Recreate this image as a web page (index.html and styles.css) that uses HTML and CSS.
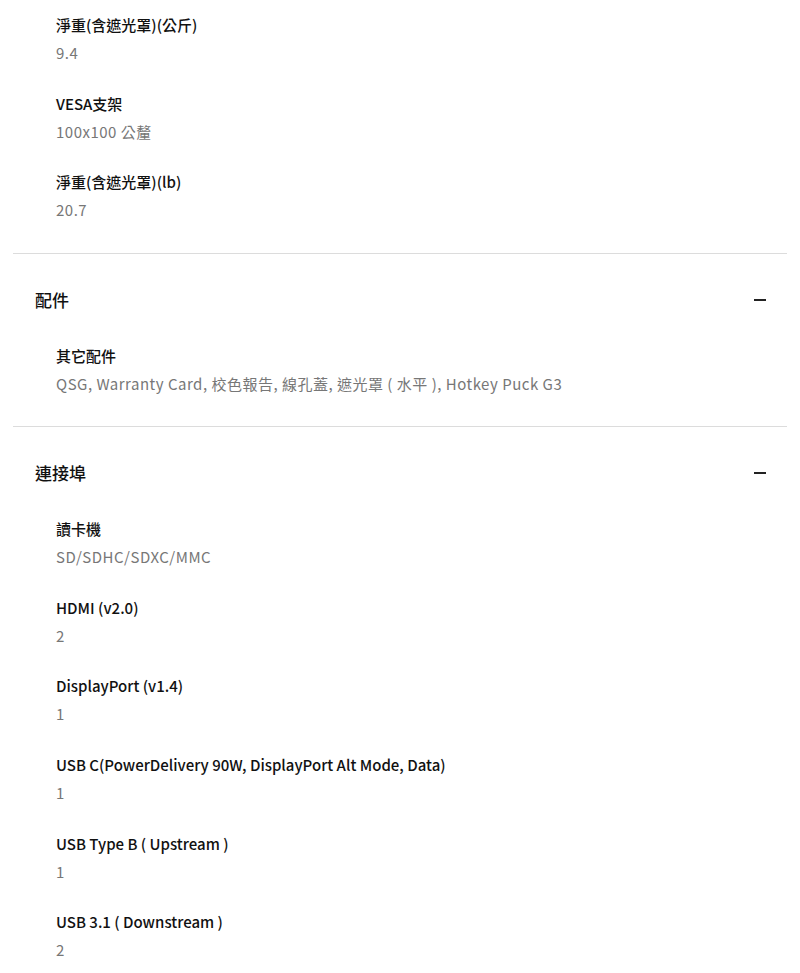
FILE: index.html
```html
<!DOCTYPE html>
<html lang="zh-Hant">
<head>
  <meta charset="UTF-8">
  <meta name="viewport" content="width=device-width, initial-scale=1.0">
  <title>規格</title>
  <link rel="stylesheet" href="styles.css">
</head>
<body>
  <div class="specs">
    <section class="group">
      <div class="items">
        <div class="item">
          <div class="label">淨重(含遮光罩)(公斤)</div>
          <div class="value">9.4</div>
        </div>
        <div class="item">
          <div class="label">VESA支架</div>
          <div class="value">100x100 公釐</div>
        </div>
        <div class="item">
          <div class="label">淨重(含遮光罩)(lb)</div>
          <div class="value">20.7</div>
        </div>
      </div>
    </section>

    <section class="group">
      <div class="group-head">
        <h3>配件</h3>
        <span class="toggle"></span>
      </div>
      <div class="items">
        <div class="item">
          <div class="label">其它配件</div>
          <div class="value">QSG, Warranty Card, 校色報告, 線孔蓋, 遮光罩 ( 水平 ), Hotkey Puck G3</div>
        </div>
      </div>
    </section>

    <section class="group">
      <div class="group-head">
        <h3>連接埠</h3>
        <span class="toggle"></span>
      </div>
      <div class="items">
        <div class="item">
          <div class="label">讀卡機</div>
          <div class="value">SD/SDHC/SDXC/MMC</div>
        </div>
        <div class="item">
          <div class="label">HDMI (v2.0)</div>
          <div class="value">2</div>
        </div>
        <div class="item">
          <div class="label">DisplayPort (v1.4)</div>
          <div class="value">1</div>
        </div>
        <div class="item">
          <div class="label">USB C(PowerDelivery 90W, DisplayPort Alt Mode, Data)</div>
          <div class="value">1</div>
        </div>
        <div class="item">
          <div class="label">USB Type B ( Upstream )</div>
          <div class="value">1</div>
        </div>
        <div class="item">
          <div class="label">USB 3.1 ( Downstream )</div>
          <div class="value">2</div>
        </div>
      </div>
    </section>
  </div>
</body>
</html>
```

FILE: styles.css
```css
body {
  margin: 0;
  background: #fff;
  color: #111;
  font-family: "Noto Sans CJK TC", "Noto Sans", sans-serif;
}

.specs {
  margin: 0 13px;
}

.group {
  border-bottom: 1px solid #dcdcdc;
  padding-bottom: 31px;
}

.group:first-child {
  padding-top: 14px;
  padding-bottom: 32px;
}

.group:last-child {
  border-bottom: none;
}

.group-head {
  display: flex;
  justify-content: space-between;
  align-items: center;
  padding: 34px 21px 0 22px;
  margin-bottom: 33px;
}

.group-head h3 {
  margin: 0;
  font-size: 17px;
  line-height: 24px;
  font-weight: 500;
}

.toggle {
  width: 12px;
  height: 2px;
  background: #222;
}

.items {
  display: flex;
  flex-direction: column;
  gap: 28.6px;
  padding-left: 43px;
}

.label {
  font-size: 15px;
  line-height: 22px;
  font-weight: 500;
}

.value {
  margin-top: 6px;
  font-size: 15px;
  line-height: 22px;
  letter-spacing: 0.5px;
  color: #777;
}
```
